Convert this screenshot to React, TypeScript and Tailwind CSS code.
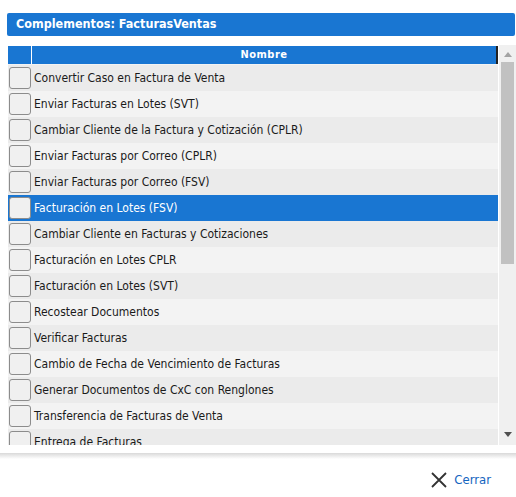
import React from 'react';

const items: string[] = [
  'Convertir Caso en Factura de Venta',
  'Enviar Facturas en Lotes (SVT)',
  'Cambiar Cliente de la Factura y Cotización (CPLR)',
  'Enviar Facturas por Correo (CPLR)',
  'Enviar Facturas por Correo (FSV)',
  'Facturación en Lotes (FSV)',
  'Cambiar Cliente en Facturas y Cotizaciones',
  'Facturación en Lotes CPLR',
  'Facturación en Lotes (SVT)',
  'Recostear Documentos',
  'Verificar Facturas',
  'Cambio de Fecha de Vencimiento de Facturas',
  'Generar Documentos de CxC con Renglones',
  'Transferencia de Facturas de Venta',
  'Entrega de Facturas',
];

const SELECTED = 5;

const Row: React.FC<{ label: string; index: number }> = ({ label, index }) => {
  const selected = index === SELECTED;
  const bg = selected ? 'bg-[#1976d2] text-white' : index % 2 === 0 ? 'bg-[#ebebeb] text-[#1a1a1a]' : 'bg-[#f3f3f3] text-[#1a1a1a]';
  return (
    <div className={`flex items-center h-[26px] shrink-0 ${bg}`}>
      <div className="w-[24px] flex justify-center shrink-0">
        <div className="w-[22px] h-[22px] rounded-[3px] border border-[#8c8c8c] bg-[#f0f0f0]" />
      </div>
      <span className="pl-[2px] text-[12px] whitespace-nowrap">{label}</span>
    </div>
  );
};

export default function App() {
  return (
    <div className="w-[516px] h-[497px] bg-white overflow-hidden flex flex-col font-['DejaVu_Sans_Condensed','DejaVu_Sans',sans-serif]">
      <div className="pt-[13px] pl-[7px] pr-px">
        <div className="h-[23px] bg-[#1976d2] rounded-[2px] flex items-center pl-[9px]">
          <span className="text-white font-bold text-[12.5px]">Complementos: FacturasVentas</span>
        </div>
      </div>

      <div className="mt-[9px] ml-[8px] flex h-[400px]">
        <div className="w-[490px] flex flex-col overflow-hidden">
          <div className="flex h-[18px] shrink-0 mt-[1px] bg-[#1976d2] border-r-2 border-[#222]">
            <div className="w-[24px] border-r border-white" />
            <div className="flex-1 flex items-center justify-center text-white font-bold text-[11px] tracking-[0.5px]">
              Nombre
            </div>
          </div>
          <div className="h-px bg-[#f3f3f3] shrink-0" />
          {items.map((label, i) => (
            <Row key={label} label={label} index={i} />
          ))}
        </div>

        <div className="w-[17px] ml-[1px] bg-[#f0f0f0] flex flex-col items-center">
          <svg width="8" height="5" viewBox="0 0 8 5" className="mt-[7px]">
            <polygon points="4,0 8,5 0,5" fill="#a3a3a3" />
          </svg>
          <div className="w-[13px] h-[202px] bg-[#c1c1c1] mt-[5px]" />
          <div className="flex-1" />
          <svg width="8" height="5" viewBox="0 0 8 5" className="mb-[8px]">
            <polygon points="0,0 8,0 4,5" fill="#505050" />
          </svg>
        </div>
      </div>

      <div className="mt-[8px] h-[6px] bg-gradient-to-b from-[#d9d9d9] to-white" />

      <div className="flex justify-end items-center pr-[25px] pt-[11px]">
        <button className="flex items-center gap-[7px] text-[#1565c0] text-[13px]">
          <svg width="16" height="16" viewBox="0 0 16 16">
            <path d="M1 1 L15 15 M15 1 L1 15" stroke="#333" strokeWidth="1.8" fill="none" />
          </svg>
          Cerrar
        </button>
      </div>
    </div>
  );
}
